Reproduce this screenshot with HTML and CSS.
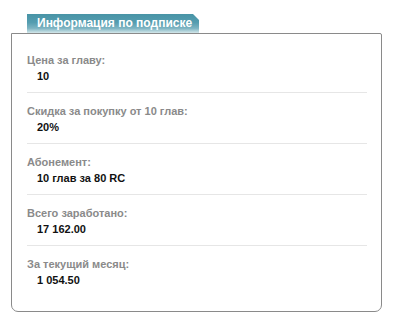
FILE: index.html
```html
<!DOCTYPE html>
<html lang="ru">
<head>
<meta charset="utf-8">
<title>Информация по подписке</title>
<link rel="stylesheet" href="styles.css">
</head>
<body>
<div class="panel">
  <div class="tab">Информация по подписке</div>
  <div class="box">
    <div class="row">
      <div class="label">Цена за главу:</div>
      <div class="value">10</div>
    </div>
    <div class="row">
      <div class="label">Скидка за покупку от 10 глав:</div>
      <div class="value">20%</div>
    </div>
    <div class="row">
      <div class="label">Абонемент:</div>
      <div class="value">10 глав за 80 RC</div>
    </div>
    <div class="row">
      <div class="label">Всего заработано:</div>
      <div class="value">17 162.00</div>
    </div>
    <div class="row last">
      <div class="label">За текущий месяц:</div>
      <div class="value">1 054.50</div>
    </div>
  </div>
</div>
</body>
</html>
```
FILE: styles.css
```css
html, body {
  margin: 0;
  padding: 0;
  background: #fff;
}
body {
  font-family: "Liberation Sans", Arial, sans-serif;
}
.panel {
  padding: 14px 0 0 11px;
  width: 371px;
}
.tab {
  margin-left: 16px;
  width: 162px;
  height: 19px;
  padding-left: 10px;
  box-sizing: content-box;
  color: #fff;
  font-weight: bold;
  font-size: 12px;
  line-height: 18px;
  background: linear-gradient(to bottom, #4894a6 0%, #559db0 45%, #7db4c2 75%, #d4e7ea 100%);
  clip-path: polygon(0 0, 166px 0, 172px 6px, 172px 100%, 0 100%);
}
.box {
  box-sizing: border-box;
  width: 371px;
  border: 1px solid #8a8a8a;
  border-radius: 0 2px 7px 7px;
  padding: 8px 0 15px;
}
.row {
  margin: 0 14px 0 15px;
  padding: 11px 0 9px;
  border-bottom: 1px solid #e6e6e6;
}
.row.last {
  border-bottom: none;
}
.label {
  color: #8a8a8a;
  font-weight: bold;
  font-size: 11px;
  line-height: 14px;
}
.value {
  margin-top: 2px;
  padding-left: 10px;
  color: #111;
  font-weight: bold;
  font-size: 11px;
  line-height: 14px;
}
```
